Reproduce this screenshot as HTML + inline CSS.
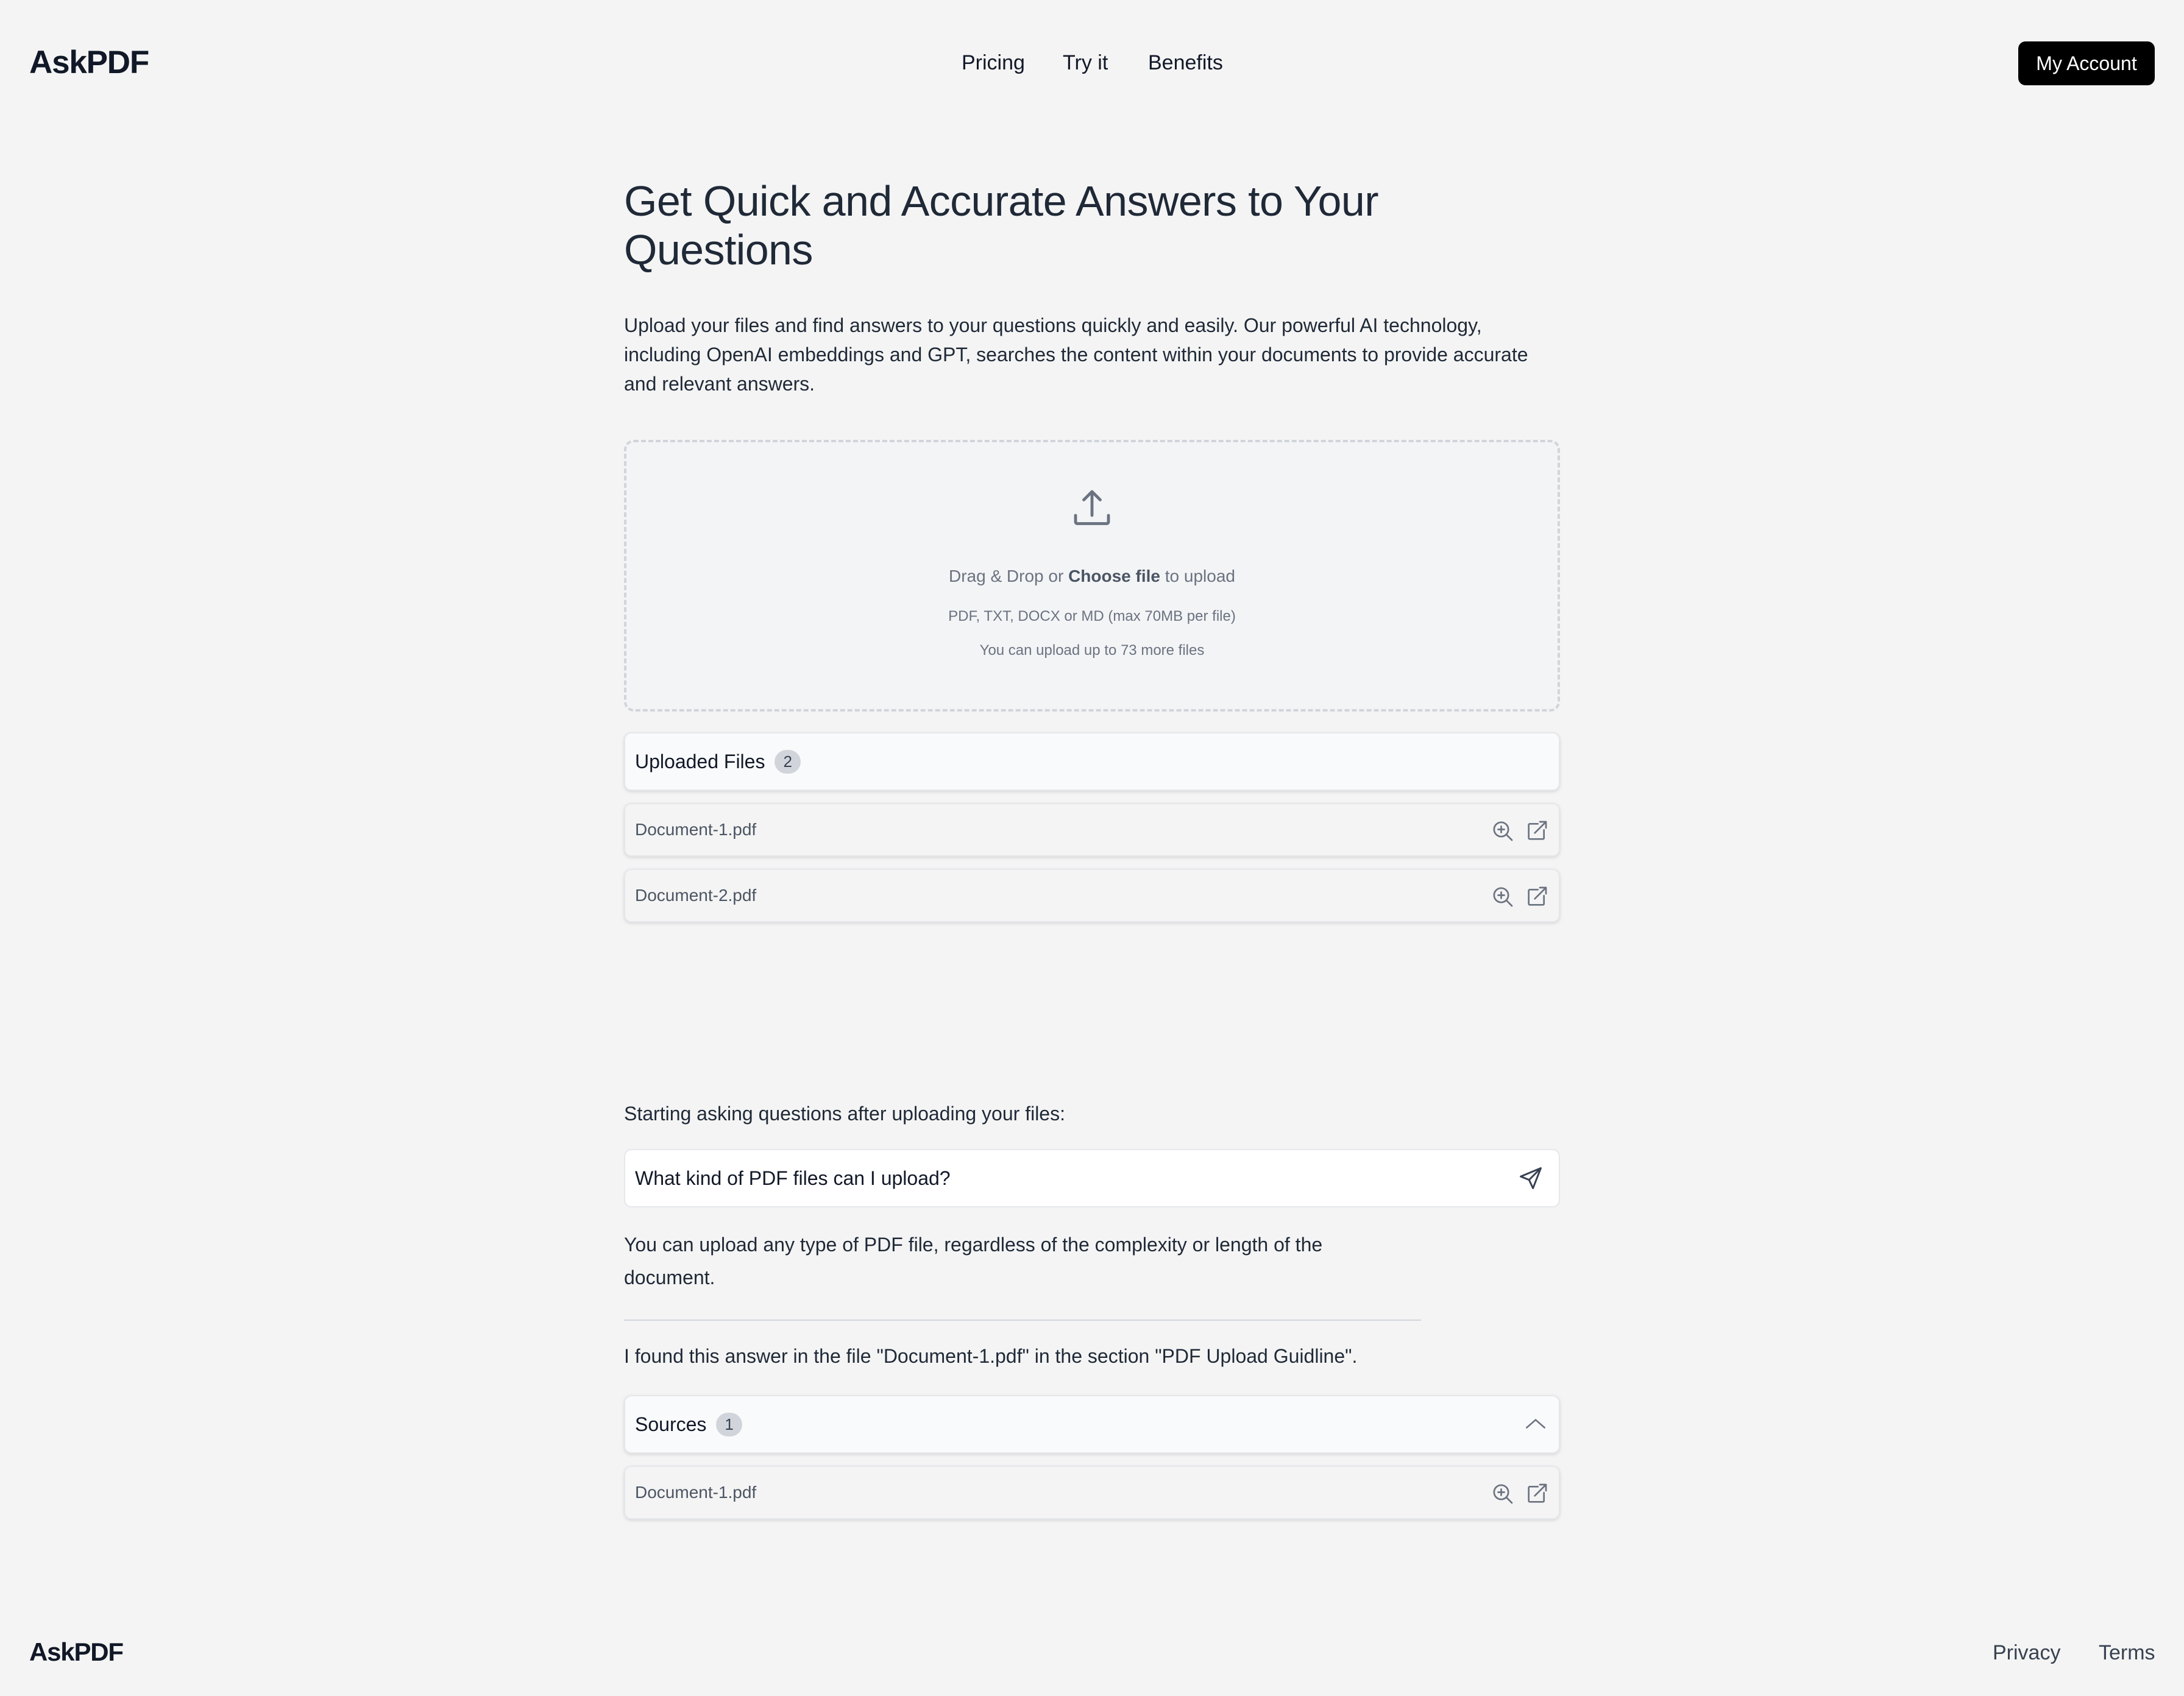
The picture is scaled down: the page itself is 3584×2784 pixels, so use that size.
<!DOCTYPE html>
<html><head><meta charset="utf-8"><style>
html,body{margin:0;padding:0}
body{width:1792px;height:1392px;zoom:2;background:#f4f4f4;font-family:"Liberation Sans",sans-serif;color:#111827;position:relative;overflow:hidden}
.a{position:absolute}
.logo{font-weight:700;letter-spacing:-0.6px}
.nav{font-size:17px;font-weight:500;top:42px}
.btn{left:1656px;top:34px;width:112px;height:36px;background:#000;color:#fff;border-radius:6px;font-size:16px;font-weight:500;display:flex;align-items:center;justify-content:center}
.box{left:512px;border:1px solid #e5e7eb;border-radius:6px;box-shadow:0 1px 3px rgba(0,0,0,.12);display:flex;align-items:center;padding:0 8px;box-sizing:border-box;width:768px}
.row{background:#f4f4f4;height:44px;font-size:14px;color:#4b5563}
.hd{background:#f9fafb;height:48px;font-size:16px;color:#111827}
.badge{display:inline-block;background:#d1d5db;border-radius:10px;font-size:13px;padding:2px 7px;margin-left:8px;color:#374151}
.ic{position:absolute;top:12px}
</style></head><body>
<div class="a logo" style="left:24px;top:36px;font-size:26.5px">AskPDF</div>
<div class="a nav" style="left:789px">Pricing</div>
<div class="a nav" style="left:872px">Try it</div>
<div class="a nav" style="left:942px">Benefits</div>
<div class="a btn">My Account</div>

<div class="a" style="left:512px;top:145px;width:720px;font-size:35px;line-height:40px;color:#1f2937;letter-spacing:-0.3px">Get Quick and Accurate Answers to Your Questions</div>
<div class="a" style="left:512px;top:255px;width:770px;font-size:16px;line-height:24px;color:#1f2937">Upload your files and find answers to your questions quickly and easily. Our powerful AI technology, including OpenAI embeddings and GPT, searches the content within your documents to provide accurate and relevant answers.</div>

<div class="a" style="left:512px;top:361px;width:768px;height:223px;box-sizing:border-box;border:2px dashed #d1d5db;border-radius:8px;background:#f3f4f6;text-align:center;color:#6b7280">
 <svg style="position:absolute;left:364px;top:36px" width="36" height="36" viewBox="0 0 24 24" fill="none" stroke="#6b7280" stroke-width="1.6" stroke-linecap="round" stroke-linejoin="round"><path d="M12 3v13M7.5 7.5L12 3l4.5 4.5M3 16v3.5a1 1 0 0 0 1 1h16a1 1 0 0 0 1-1V16"/></svg>
 <div style="position:absolute;top:102px;width:100%;font-size:14px">Drag &amp; Drop or <b style="color:#4b5563">Choose file</b> to upload</div>
 <div style="position:absolute;top:136px;width:100%;font-size:12px">PDF, TXT, DOCX or MD (max 70MB per file)</div>
 <div style="position:absolute;top:164px;width:100%;font-size:12px">You can upload up to 73 more files</div>
</div>

<div class="a box hd" style="top:601px">Uploaded Files<span class="badge">2</span></div>
<div class="a box row" style="top:659px">Document-1.pdf
 <svg class="ic" style="left:710px" width="20" height="20" viewBox="0 0 24 24" fill="none" stroke="#6b7280" stroke-width="1.6" stroke-linecap="round"><circle cx="10.5" cy="10.5" r="7"/><path d="M15.5 15.5L21 21M10.5 7.5v6M7.5 10.5h6"/></svg>
 <svg class="ic" style="left:738px" width="20" height="20" viewBox="0 0 24 24" fill="none" stroke="#6b7280" stroke-width="1.6" stroke-linecap="round" stroke-linejoin="round"><path d="M13 5H5a1 1 0 0 0-1 1v13a1 1 0 0 0 1 1h13a1 1 0 0 0 1-1v-8M10 14L21 3M15 3h6v6"/></svg></div>
<div class="a box row" style="top:713px">Document-2.pdf
 <svg class="ic" style="left:710px" width="20" height="20" viewBox="0 0 24 24" fill="none" stroke="#6b7280" stroke-width="1.6" stroke-linecap="round"><circle cx="10.5" cy="10.5" r="7"/><path d="M15.5 15.5L21 21M10.5 7.5v6M7.5 10.5h6"/></svg>
 <svg class="ic" style="left:738px" width="20" height="20" viewBox="0 0 24 24" fill="none" stroke="#6b7280" stroke-width="1.6" stroke-linecap="round" stroke-linejoin="round"><path d="M13 5H5a1 1 0 0 0-1 1v13a1 1 0 0 0 1 1h13a1 1 0 0 0 1-1v-8M10 14L21 3M15 3h6v6"/></svg></div>

<div class="a" style="left:512px;top:905px;font-size:16px;color:#1f2937">Starting asking questions after uploading your files:</div>
<div class="a box" style="top:943px;height:48px;background:#fff;font-size:16px;box-shadow:none">What kind of PDF files can I upload?
 <svg class="ic" style="left:732px" width="22" height="22" viewBox="0 0 24 24" fill="none" stroke="#374151" stroke-width="1.6" stroke-linejoin="round"><path d="M21 3L3 10.5l7.5 3L14 21zM21 3L10.5 13.5"/></svg></div>
<div class="a" style="left:512px;top:1008px;width:620px;font-size:16px;line-height:27px;color:#1f2937">You can upload any type of PDF file, regardless of the complexity or length of the document.</div>
<div class="a" style="left:512px;top:1083px;width:654px;height:1px;background:#d1d5db"></div>
<div class="a" style="left:512px;top:1104px;font-size:16px;color:#1f2937">I found this answer in the file "Document-1.pdf" in the section "PDF Upload Guidline".</div>
<div class="a box hd" style="top:1145px">Sources<span class="badge">1</span>
 <svg class="ic" style="left:736px" width="22" height="22" viewBox="0 0 24 24" fill="none" stroke="#6b7280" stroke-width="1.4" stroke-linecap="round"><path d="M4 15l8-7 8 7"/></svg></div>
<div class="a box row" style="top:1203px">Document-1.pdf
 <svg class="ic" style="left:710px" width="20" height="20" viewBox="0 0 24 24" fill="none" stroke="#6b7280" stroke-width="1.6" stroke-linecap="round"><circle cx="10.5" cy="10.5" r="7"/><path d="M15.5 15.5L21 21M10.5 7.5v6M7.5 10.5h6"/></svg>
 <svg class="ic" style="left:738px" width="20" height="20" viewBox="0 0 24 24" fill="none" stroke="#6b7280" stroke-width="1.6" stroke-linecap="round" stroke-linejoin="round"><path d="M13 5H5a1 1 0 0 0-1 1v13a1 1 0 0 0 1 1h13a1 1 0 0 0 1-1v-8M10 14L21 3M15 3h6v6"/></svg></div>

<div class="a logo" style="left:24px;top:1344px;font-size:21px">AskPDF</div>
<div class="a" style="left:1635px;top:1347px;font-size:17px;color:#374151">Privacy</div>
<div class="a" style="left:1722px;top:1347px;font-size:17px;color:#374151">Terms</div>
</body></html>
